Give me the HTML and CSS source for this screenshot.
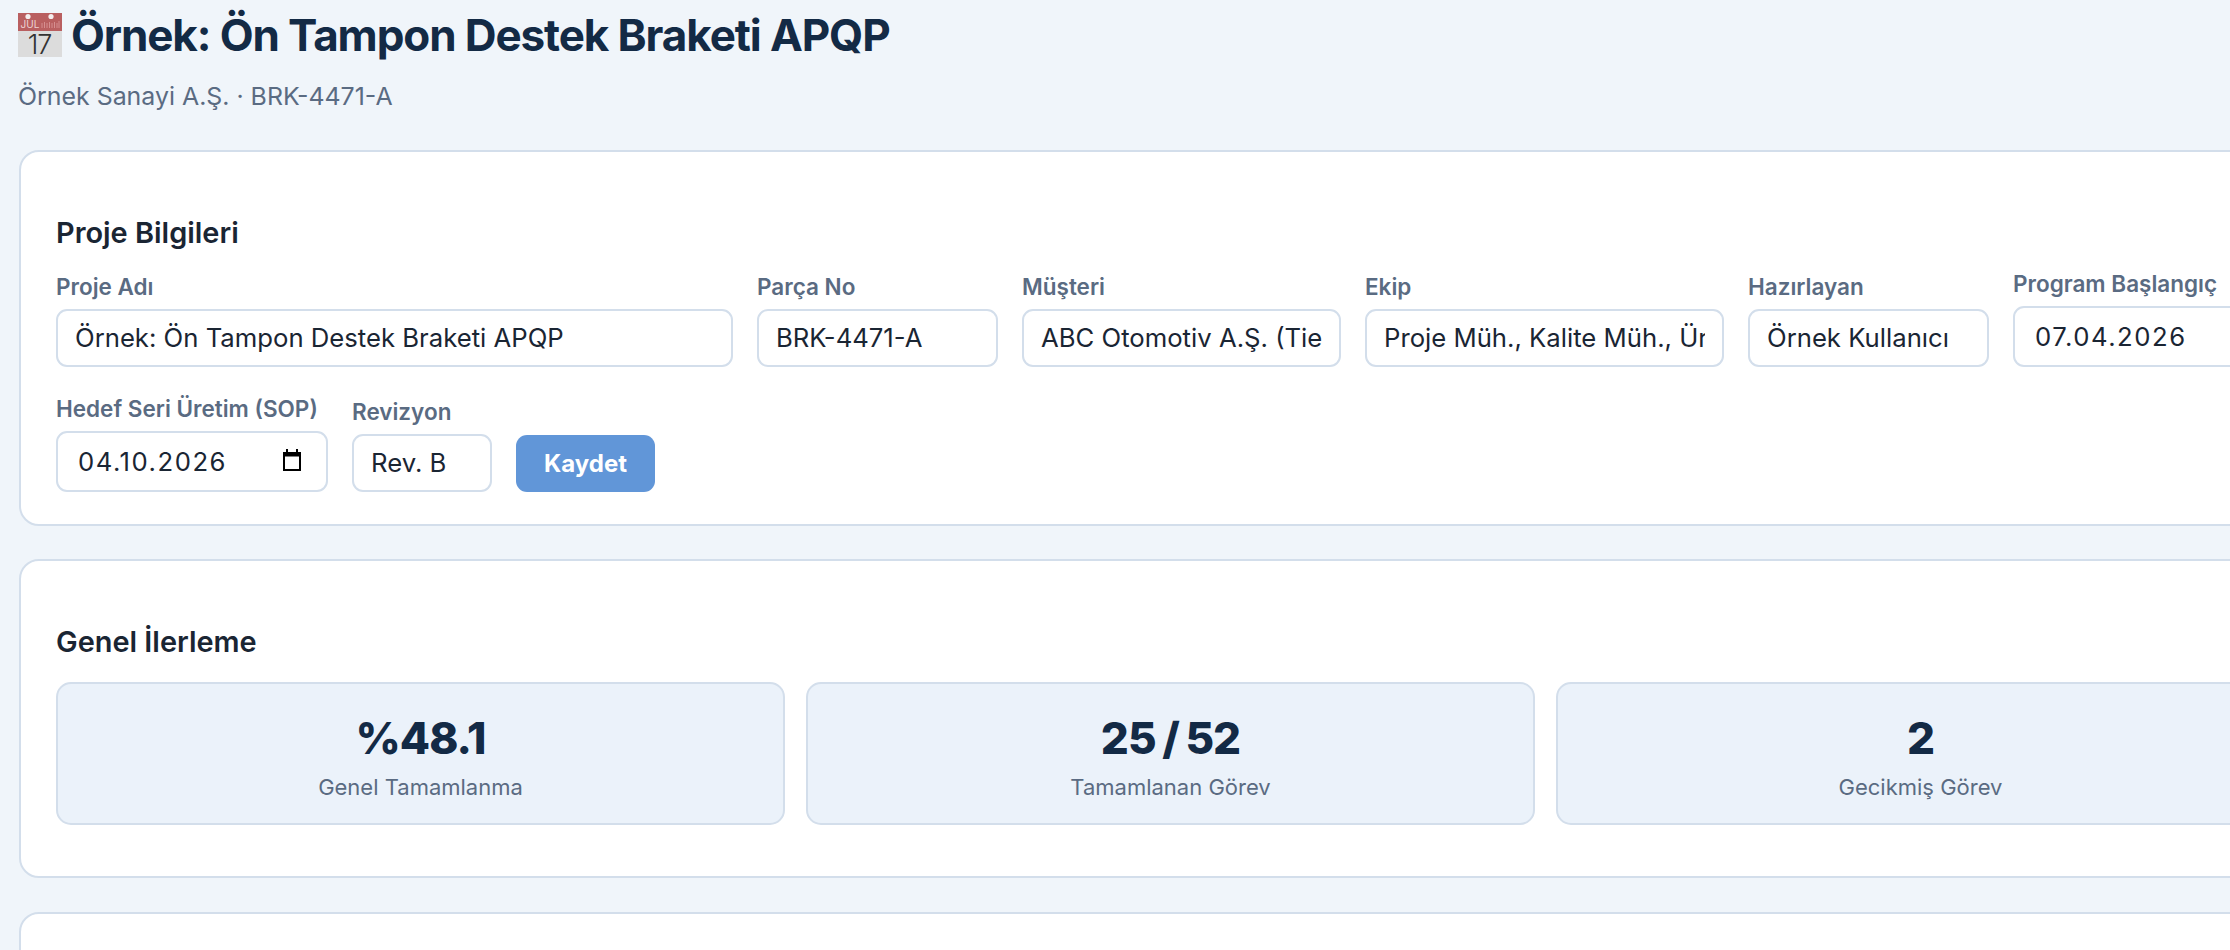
FILE: index.html
```html
<!DOCTYPE html>
<html lang="tr">
<head>
  <meta charset="UTF-8">
  <meta name="viewport" content="width=device-width, initial-scale=1.0">
  <title>Örnek: Ön Tampon Destek Braketi APQP</title>
  <link rel="stylesheet" href="styles.css">
</head>
<body>
  <header class="page-header">
    <h1 class="page-title">
      <svg class="title-icon" viewBox="0 0 44 44" aria-hidden="true">
        <rect x="0" y="17" width="44" height="27" fill="#dcdcdc"/>
        <rect x="0" y="0" width="44" height="18" fill="#b95f60"/>
        <circle cx="10" cy="3.5" r="2.6" fill="#f4eeee"/>
        <circle cx="33" cy="3.5" r="2.6" fill="#f4eeee"/>
        <text x="2.5" y="15" class="icon-month">JUL</text>
        <path d="M24 15V10M26.5 15V9M29 15V10M31.5 15V9M34 15V10M36.5 15V9M39 15V10M41 15V8" stroke="#d58f90" stroke-width="1"/>
        <text x="21.5" y="40.5" class="icon-day">17</text>
      </svg>
      Örnek: Ön Tampon Destek Braketi APQP
    </h1>
    <p class="page-subtitle">Örnek Sanayi A.Ş. · BRK-4471-A</p>
  </header>

  <section class="card card-form">
    <h2 class="card-title">Proje Bilgileri</h2>
    <div class="form-row">
      <div class="field w-name">
        <label>Proje Adı</label>
        <input type="text" value="Örnek: Ön Tampon Destek Braketi APQP">
      </div>
      <div class="field w-part">
        <label>Parça No</label>
        <input type="text" value="BRK-4471-A">
      </div>
      <div class="field w-customer">
        <label>Müşteri</label>
        <input type="text" value="ABC Otomotiv A.Ş. (Tier 1)">
      </div>
      <div class="field w-team">
        <label>Ekip</label>
        <input type="text" value="Proje Müh., Kalite Müh., Üretim Müh.">
      </div>
      <div class="field w-author">
        <label>Hazırlayan</label>
        <input type="text" value="Örnek Kullanıcı">
      </div>
      <div class="field w-date">
        <label>Program Başlangıç</label>
        <div class="date-box">
          <input class="date-input" type="text" value="07.04.2026">
        </div>
      </div>
    </div>
    <div class="form-row">
      <div class="field w-sop">
        <label>Hedef Seri Üretim (SOP)</label>
        <div class="date-box">
          <input class="date-input" type="text" value="04.10.2026">
          <svg class="date-icon" viewBox="0 0 20 22" aria-hidden="true">
            <path d="M2 4.5H18V21H2Z" fill="none" stroke="#000" stroke-width="2"/>
            <rect x="1" y="3" width="18" height="4.5" fill="#000"/>
            <rect x="4" y="0" width="2" height="4" fill="#000"/>
            <rect x="14" y="0" width="2" height="4" fill="#000"/>
          </svg>
        </div>
      </div>
      <div class="field w-rev">
        <label>Revizyon</label>
        <input type="text" value="Rev. B">
      </div>
      <button class="save-btn" type="button">Kaydet</button>
    </div>
  </section>

  <section class="card card-stats">
    <h2 class="card-title">Genel İlerleme</h2>
    <div class="stats">
      <div class="stat">
        <div class="stat-value">%48.1</div>
        <div class="stat-label">Genel Tamamlanma</div>
      </div>
      <div class="stat">
        <div class="stat-value">25 / 52</div>
        <div class="stat-label">Tamamlanan Görev</div>
      </div>
      <div class="stat">
        <div class="stat-value">2</div>
        <div class="stat-label">Gecikmiş Görev</div>
      </div>
    </div>
  </section>

  <section class="card card-next"></section>
</body>
</html>
```

FILE: styles.css
```css
html{
  overflow: hidden;
}
body{
  margin: 0;
  width: 2420px;
  padding: 0 0 40px 19px;
  background-color: #f0f5fa;
  font-family: Inter, "Noto Sans", sans-serif;
  color: #1a2533;
}
.page-header{
  height: 150px;
}
.page-title{
  display: flex;
  align-items: center;
  gap: 9px;
  margin: 0 0 0 -1px;
  padding-top: 13px;
  font-size: 44px;
  line-height: 44px;
  font-weight: 700;
  letter-spacing: -1.1px;
  color: #132a45;
}
.title-icon{
  width: 44px;
  height: 44px;
  flex-shrink: 0;
  overflow: visible;
}
.icon-month{
  font-size: 10px;
  font-weight: 400;
  letter-spacing: 0;
  fill: #ecd3d3;
}
.icon-day{
  font-size: 27px;
  font-weight: 300;
  letter-spacing: -1px;
  fill: #333;
  text-anchor: middle;
}
.page-subtitle{
  margin: 25px 0 0 -1px;
  font-size: 24.9px;
  line-height: 28px;
  color: #5a6b82;
}
.card{
  background-color: #fff;
  border: 2px solid #d3deeb;
  border-radius: 20px;
  padding: 0 35px;
  margin-bottom: 34px;
}
.card-form{
  height: 376px;
  margin-bottom: 33px;
  box-sizing: border-box;
}
.card-stats{
  height: 319px;
  box-sizing: border-box;
}
.card-next{
  height: 200px;
}
.card-title{
  margin: 0;
  padding-top: 64px;
  font-size: 28.9px;
  line-height: 34px;
  font-weight: 600;
  color: #1a2533;
}
.form-row{
  display: flex;
  align-items: flex-end;
  gap: 24px;
  margin-top: 20.5px;
}
.form-row + .form-row{
  margin-top: 29px;
}
.field{
  display: flex;
  flex-direction: column;
  gap: 9px;
}
.field label{
  font-size: 22.5px;
  line-height: 26px;
  font-weight: 600;
  white-space: nowrap;
  color: #5a6b82;
}
.field input{
  box-sizing: border-box;
  width: 100%;
  height: 58px;
  padding: 0 17px;
  border: 2px solid #d3deeb;
  border-radius: 11px;
  background: #fff;
  font-family: inherit;
  font-size: 25.7px;
  color: #1a2533;
  outline: none;
}
.w-name{ width: 677px; }
.w-part{ width: 241px; }
.w-customer{ width: 319px; }
.w-team{ width: 359px; }
.w-author{ width: 241px; }
.w-date{ width: 300px; }
.w-sop{ width: 272px; }
.w-rev{ width: 140px; }
.date-box{
  position: relative;
}
.field .date-input{
  height: 61px;
  padding: 0 20px;
  letter-spacing: 1.5px;
}
.date-icon{
  position: absolute;
  left: 226px;
  top: 18px;
  width: 20px;
  height: 22px;
}
.save-btn{
  width: 139px;
  height: 57px;
  border: none;
  border-radius: 11px;
  background-color: #6196d8;
  font-family: inherit;
  font-size: 24px;
  font-weight: 700;
  color: #fff;
}
.stats{
  display: grid;
  grid-template-columns: repeat(3, 729px);
  gap: 21px;
  margin-top: 23px;
}
.stat{
  box-sizing: border-box;
  height: 143px;
  padding-top: 27px;
  background-color: #ebf2fa;
  border: 2px solid #d3deeb;
  border-radius: 15px;
  text-align: center;
}
.stat-value{
  font-size: 44px;
  line-height: 54px;
  font-weight: 800;
  letter-spacing: -1px;
  word-spacing: -2px;
  color: #132a45;
}
.stat-label{
  margin-top: 6.5px;
  font-size: 22px;
  line-height: 30px;
  color: #5a6b82;
}
```
